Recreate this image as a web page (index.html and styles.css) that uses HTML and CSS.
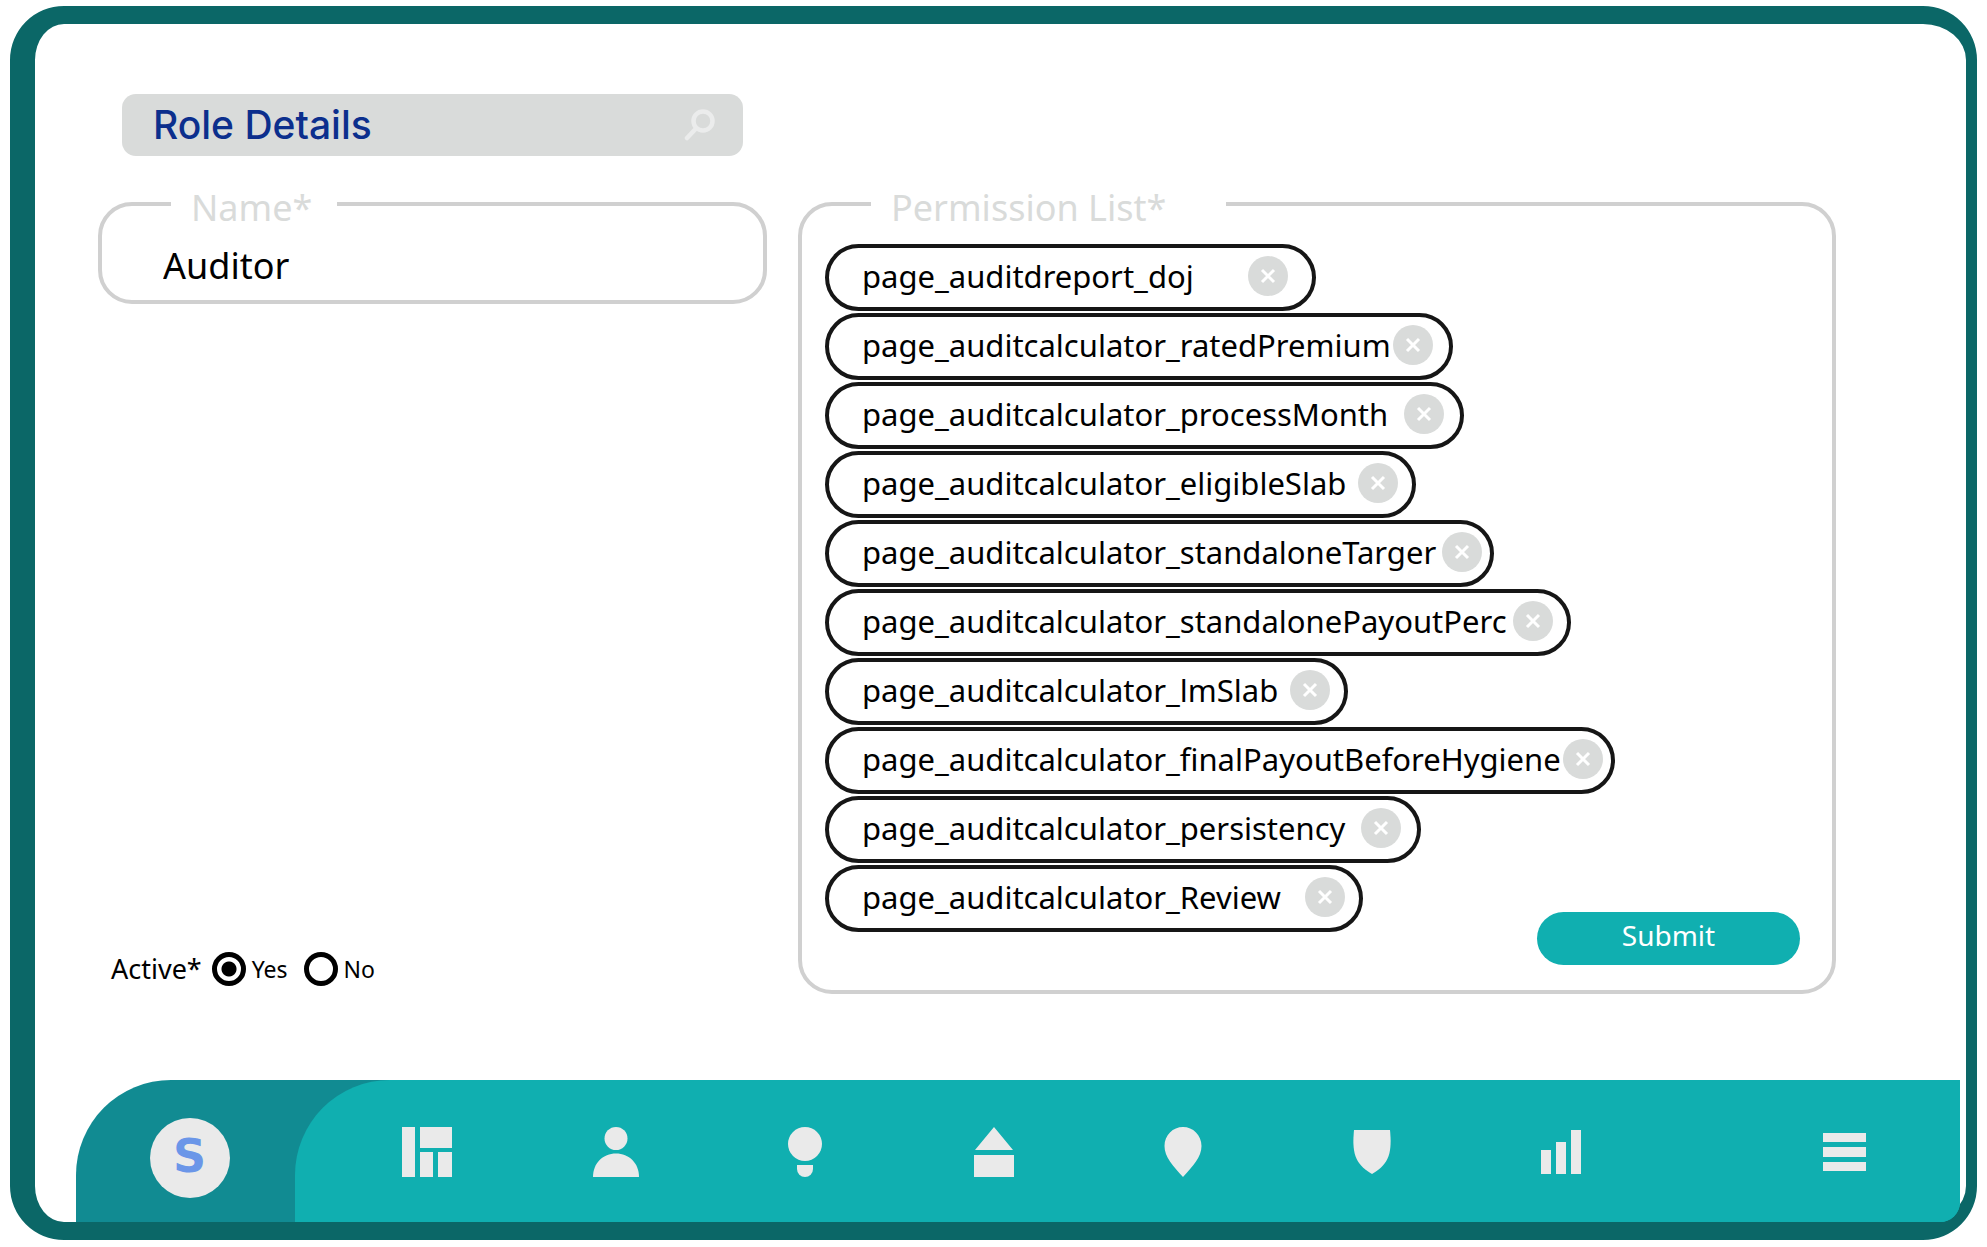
FILE: index.html
```
<!DOCTYPE html>
<html lang="en">
<head>
<meta charset="utf-8">
<meta name="viewport" content="width=device-width, initial-scale=1">
<title>Role Details</title>
<link rel="stylesheet" href="styles.css">
</head>
<body>
<svg class="sprite" aria-hidden="true">
  <symbol id="cross" viewBox="0 0 40 40"><path d="M14 14 26 26M26 14 14 26"/></symbol>
</svg>
<div class="frame">
  <form class="role">
    <div class="search">
      <h1 class="search-title">Role Details</h1>
      <button class="search-button" type="button" aria-label="Search">
        <svg width="32" height="32" viewBox="0 0 32 32" aria-hidden="true"><circle cx="20" cy="12" r="9.500"/><path d="M13 19.500 4 29"/></svg>
      </button>
    </div>

    <div class="details">
      <fieldset class="box name-box">
        <legend class="legend"><label for="name">Name*</label></legend>
        <input class="name-input" id="name" type="text" value="Auditor">
      </fieldset>

      <div class="active" role="radiogroup" aria-labelledby="active-label">
        <span class="active-label" id="active-label">Active*</span>
        <label class="choice"><input class="radio" type="radio" name="active" checked>Yes</label>
        <label class="choice"><input class="radio" type="radio" name="active">No</label>
      </div>
    </div>

    <fieldset class="box permission-box">
      <legend class="legend legend-wide">Permission List*</legend>
      <div class="permissions">
        <ul class="chips">
          <li class="chip">page_auditdreport_doj<button class="remove" type="button" aria-label="Remove"><svg width="40" height="40"><use href="#cross"/></svg></button></li>
          <li class="chip">page_auditcalculator_ratedPremium<button class="remove" type="button" aria-label="Remove"><svg width="40" height="40"><use href="#cross"/></svg></button></li>
          <li class="chip">page_auditcalculator_processMonth<button class="remove" type="button" aria-label="Remove"><svg width="40" height="40"><use href="#cross"/></svg></button></li>
          <li class="chip">page_auditcalculator_eligibleSlab<button class="remove" type="button" aria-label="Remove"><svg width="40" height="40"><use href="#cross"/></svg></button></li>
          <li class="chip">page_auditcalculator_standaloneTarger<button class="remove" type="button" aria-label="Remove"><svg width="40" height="40"><use href="#cross"/></svg></button></li>
          <li class="chip">page_auditcalculator_standalonePayoutPerc<button class="remove" type="button" aria-label="Remove"><svg width="40" height="40"><use href="#cross"/></svg></button></li>
          <li class="chip">page_auditcalculator_lmSlab<button class="remove" type="button" aria-label="Remove"><svg width="40" height="40"><use href="#cross"/></svg></button></li>
          <li class="chip">page_auditcalculator_finalPayoutBeforeHygiene<button class="remove" type="button" aria-label="Remove"><svg width="40" height="40"><use href="#cross"/></svg></button></li>
          <li class="chip">page_auditcalculator_persistency<button class="remove" type="button" aria-label="Remove"><svg width="40" height="40"><use href="#cross"/></svg></button></li>
          <li class="chip">page_auditcalculator_Review<button class="remove" type="button" aria-label="Remove"><svg width="40" height="40"><use href="#cross"/></svg></button></li>
        </ul>
        <button class="submit" type="submit">Submit</button>
      </div>
    </fieldset>
  </form>

  <nav class="nav" aria-label="Main">
    <a class="brand" href="#home" aria-label="Home"><span class="brand-mark">S</span></a>
    <div class="nav-links">
      <a class="nav-link" href="#dashboard" aria-label="Dashboard"><svg width="50" height="50" viewBox="0 0 50 50"><path d="M0 0h13v50H0zM18 0h32v21H18zM18 25h13v25H18zM36 25h14v25H36z"/></svg></a>
      <a class="nav-link" href="#profile" aria-label="Profile"><svg width="50" height="50" viewBox="0 0 50 50"><circle cx="25" cy="11.500" r="11.500"/><path d="M2 50C2 36 12 26.500 25 26.500S48 36 48 50z"/></svg></a>
      <a class="nav-link" href="#ideas" aria-label="Ideas"><svg width="50" height="50" viewBox="0 0 50 50"><circle cx="25" cy="17" r="17"/><path d="M17 38h16v4a8 8 0 0 1-16 0z"/></svg></a>
      <a class="nav-link" href="#branch" aria-label="Branch"><svg width="50" height="50" viewBox="0 0 50 50"><path d="M25 0 44 23H6zM5 28h40v22H5z"/></svg></a>
      <a class="nav-link" href="#location" aria-label="Location"><svg width="50" height="50" viewBox="0 0 50 50"><path d="M25 0C35 0 43.500 8 43.500 19C43.500 30 35 39 25 50C15 39 6.500 30 6.500 19C6.500 8 15 0 25 0z"/></svg></a>
      <a class="nav-link" href="#security" aria-label="Security"><svg width="50" height="50" viewBox="0 0 50 50"><path d="M7 3h36C45 24 43 37 25 47C7 37 5 24 7 3z"/></svg></a>
      <a class="nav-link" href="#reports" aria-label="Reports"><svg width="50" height="50" viewBox="0 0 50 50"><path d="M5 23h10v24H5zM20 15h10v32H20zM35 3h10v44H35z"/></svg></a>
      <button class="menu" type="button" aria-label="Menu"><svg width="43" height="50" viewBox="0 0 43 50"><path d="M0 6h43v9H0zM0 20h43v10H0zM0 35h43v9H0z"/></svg></button>
    </div>
  </nav>
</div>
</body>
</html>
```
FILE: styles.css
```
:root {
  --frame: #0b6767;
  --teal: #10afb0;
  --teal-dark: #118b92;
  --line: #d0d0d0;
  --grey: #d9dbda;
  --light: #eaeaea;
  --ink: #161616;
}

* {
  box-sizing: border-box;
}

body {
  display: flex;
  min-height: 100vh;
  margin: 0;
  padding: 6px 10px 7px;
  background: #fff;
  color: #000;
  font-family: "Noto Sans", "Open Sans", sans-serif;
}

button {
  padding: 0;
  border: 0;
  background: none;
  font: inherit;
  cursor: pointer;
}

svg {
  display: block;
}

.sprite {
  position: absolute;
  width: 0;
  height: 0;
}

.frame {
  display: flex;
  flex: 1;
  flex-direction: column;
  border: solid var(--frame);
  border-width: 18px 11px 18px 25px;
  border-radius: 54px;
}

/* Form */

.role {
  display: grid;
  flex: 1;
  grid-template-columns: minmax(0, 669fr) minmax(0, 1038fr);
  grid-template-rows: auto 1fr;
  gap: 24px 31px;
  padding: 70px 130px 86px 63px;
}

.search {
  display: flex;
  align-items: center;
  justify-content: space-between;
  height: 62px;
  margin: 0 24px;
  padding: 0 28px 0 31px;
  border-radius: 14px;
  background: var(--grey);
}

.search-title {
  margin: 0;
  color: #0c2f8d;
  font: 500 39px/60px Inter, sans-serif;
}

.search-button svg {
  fill: none;
  stroke: #ebecec;
  stroke-width: 4.5;
  stroke-linecap: round;
}

.details {
  display: flex;
  grid-row: 2;
  flex-direction: column;
  justify-content: space-between;
  padding-bottom: 8px;
}

.box {
  min-width: 0;
  margin: 0;
  border: 4px solid var(--line);
  border-radius: 34px;
}

.legend {
  min-width: 166px;
  margin-left: 8px;
  padding: 8px 20px 0;
  color: var(--grey);
  font-size: 36px;
  line-height: 40px;
}

.legend-wide {
  min-width: 355px;
  margin-left: 46px;
}

.name-box {
  padding: 14px 61px 10px;
}

.name-input {
  display: block;
  width: 100%;
  height: 48px;
  padding: 0;
  border: 0;
  background: none;
  color: #000;
  font: 36px/48px "Noto Sans", "Open Sans", sans-serif;
  outline: 0;
}

.active {
  display: flex;
  align-items: center;
  gap: 16px;
  padding-left: 13px;
}

.active-label {
  margin-right: -6px;
  font-size: 27px;
  line-height: 34px;
}

.choice {
  display: flex;
  align-items: center;
  gap: 6px;
  font-size: 23px;
  line-height: 34px;
}

.radio {
  width: 34px;
  height: 34px;
  margin: 0;
  border: 5px solid #000;
  border-radius: 50%;
  background: #fff;
  appearance: none;
}

.radio:checked {
  background: radial-gradient(circle, #000 7px, #fff 8px);
}

.permission-box {
  grid-row: 2;
  grid-column: 2;
  padding: 16px 32px 25px 23px;
}

.permissions {
  display: flex;
  align-items: flex-end;
  justify-content: space-between;
  height: 100%;
}

.chips {
  display: flex;
  flex-direction: column;
  align-items: flex-start;
  align-self: flex-start;
  gap: 2px;
  width: 0;
  margin: 0;
  padding: 0;
  list-style: none;
}

.chip {
  display: flex;
  align-items: center;
  justify-content: space-between;
  height: 67px;
  gap: 12px;
  padding: 0 14px 3px 33px;
  border: 4px solid var(--ink);
  border-radius: 34px;
  font-size: 31px;
  line-height: 40px;
  white-space: nowrap;
}

.chip:first-child {
  gap: 54px;
  padding-right: 24px;
}

.chip:nth-child(2),
.chip:nth-child(8) {
  gap: 2px;
}

.chip:nth-child(3),
.chip:nth-child(9) {
  gap: 16px;
}

.chip:nth-child(10) {
  gap: 24px;
}

.chip:nth-child(5),
.chip:nth-child(6) {
  gap: 6px;
}

.chip:nth-child(5),
.chip:nth-child(8) {
  padding-right: 8px;
}

.chip:nth-child(2),
.chip:nth-child(3),
.chip:nth-child(9) {
  padding-right: 16px;
}

.remove {
  border-radius: 50%;
  background: var(--grey);
  stroke: #fff;
  stroke-width: 3;
}

.submit {
  width: 263px;
  height: 53px;
  padding-bottom: 7px;
  border-radius: 27px;
  background: var(--teal);
  color: #fff;
  font-size: 28px;
  line-height: 40px;
}

/* Bottom navigation */

.nav {
  display: flex;
  height: 142px;
  margin: 0 6px 0 41px;
  border-radius: 95px 0 20px 0;
  background: linear-gradient(90deg, var(--teal-dark) 50%, var(--teal) 50%);
}

.brand {
  display: grid;
  width: 219px;
  padding: 14px 0 0 8px;
  place-items: center;
  text-decoration: none;
}

.brand-mark {
  width: 80px;
  height: 80px;
  border-radius: 50%;
  background: var(--light);
  color: #6b96e8;
  font: bold 46px/76px "DejaVu Sans", sans-serif;
  text-align: center;
}

.nav-links {
  display: grid;
  flex: 1;
  grid-template-columns: repeat(7, 189fr) 211fr;
  align-items: center;
  justify-items: center;
  padding: 2px 94px 0 37px;
  border-radius: 95px 0 20px 0;
  background: var(--teal);
  fill: var(--light);
}

.menu {
  justify-self: end;
}
```
